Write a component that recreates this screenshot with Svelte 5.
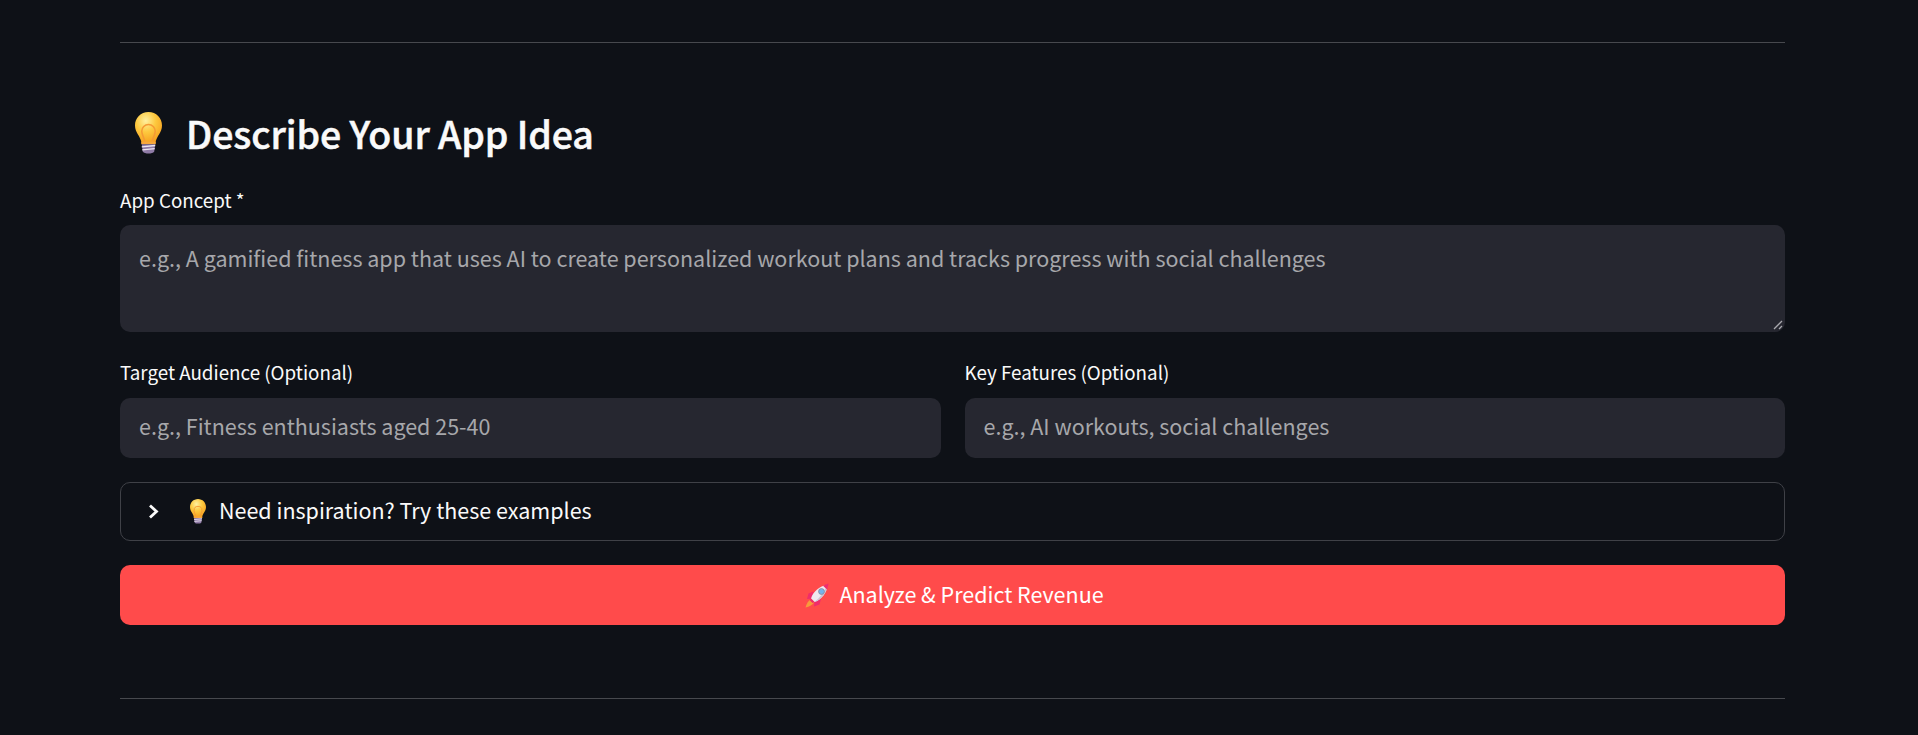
<script>
  const conceptHint = "e.g., A gamified fitness app that uses AI to create personalized workout plans and tracks progress with social challenges";
</script>

{#snippet bulb(width)}
  <svg class="emoji" width={width} height={width * 1.54} viewBox="0 0 26 40" aria-hidden="true">
    <defs>
      <radialGradient id="glass" cx="0.4" cy="0.28" r="0.72">
        <stop offset="0" stop-color="#fff0a0" />
        <stop offset="0.5" stop-color="#fdc93f" />
        <stop offset="1" stop-color="#f6a11f" />
      </radialGradient>
    </defs>
    <path d="M13 0C5.500 0 0 5.800 0 13c0 7 5 9.500 6.500 17h13C21 22.500 26 20 26 13 26 5.800 20.500 0 13 0z" fill="url(#glass)" />
    <path d="M9.500 29c-.4-4-3-7-3-10.500a6.500 6.500 0 0 1 13 0c0 3.500-2.600 6.500-3 10.500" fill="none" stroke="#f59a35" stroke-width="1.500" />
    <path d="M6 28.500h14V31H6z" fill="#f6a83c" />
    <path d="M6.500 31h13l-1 7c-1.500 2.600-9.500 2.600-11 0z" fill="#8f7ba6" />
    <path d="M6.500 33.500l13-1.300M7 36.500l12-1.300" stroke="#ece6f2" stroke-width="1.300" />
  </svg>
{/snippet}

{#snippet rocket()}
  <svg class="emoji" width="24" height="25" viewBox="0 0 24 25" aria-hidden="true">
    <path d="M6 16C3.500 17.500 1.500 20.500 0.500 24.500c4-.8 7-2.500 9-5.500z" fill="#f79a3c" />
    <path d="M8.500 8.500L3.500 10.500 2 16l5.500-.5zM16 16l-1.500 5.500L9 23.500l.5-5z" fill="#f02c6c" />
    <path d="M6 15.500C8 9 14 3.500 22.500 1.500 22 10 16.500 16.500 9.500 19z" fill="#efe9f0" />
    <path d="M9.500 19C15 14.500 19 9 22.500 1.500 22 10 16.500 16.500 9.500 19z" fill="#cdc6d6" />
    <path d="M18 2.800C19.500 2 21.500 1 23.500 0.500 23.300 2.500 22.800 4.800 22 6.500z" fill="#f02c6c" />
    <path d="M6 15.500l3.500 3.500-2 1-3-3z" fill="#f02c6c" />
    <circle cx="16.500" cy="8.500" r="2.900" fill="#74b4ec" stroke="#8d8a9c" stroke-width=".9" />
  </svg>
{/snippet}

<main class="page">
  <hr />

  <h2>{@render bulb(27)}<span>Describe Your App Idea</span></h2>

  <label class="field">
    <span class="label">App Concept *</span>
    <span class="textarea">
      <span class="placeholder">{conceptHint}</span>
      <svg class="grip" width="10" height="10" viewBox="0 0 10 10" aria-hidden="true">
        <path d="M1 9l8-8M6 9l3-3" stroke="#a9a9ae" stroke-width="1.300" />
      </svg>
    </span>
  </label>

  <div class="columns">
    <label class="field">
      <span class="label">Target Audience (Optional)</span>
      <span class="input"><span class="placeholder">e.g., Fitness enthusiasts aged 25-40</span></span>
    </label>
    <label class="field">
      <span class="label">Key Features (Optional)</span>
      <span class="input"><span class="placeholder">e.g., AI workouts, social challenges</span></span>
    </label>
  </div>

  <div class="expander">
    <svg class="chevron" width="11" height="15" viewBox="0 0 11 15" aria-hidden="true">
      <path d="M2 1.500L8.500 7.500 2 13.500" fill="none" stroke="#fafafa" stroke-width="2.800" />
    </svg>
    {@render bulb(16)}
    <span>Need inspiration? Try these examples</span>
  </div>

  <button class="primary">{@render rocket()}<span>Analyze &amp; Predict Revenue</span></button>

  <hr class="last" />
</main>

<style>
  :global(body) {
    background: #0e1117;
  }

  .page {
    box-sizing: border-box;
    width: 1785px;
    height: 735px;
    padding: 42px 0 0 120px;
    overflow: hidden;
    color: #fafafa;
    font-family: "Noto Sans CJK SC", "Noto Sans", sans-serif;
  }

  hr {
    margin: 0;
    border: 0;
    border-top: 1px solid #47494e;
  }

  .last {
    margin-top: 73px;
  }

  h2 {
    display: flex;
    align-items: center;
    gap: 24px;
    margin: 63px 0 0 15px;
    height: 54px;
    font-size: 37.500px;
    font-weight: 500;
    line-height: 54px;
    letter-spacing: -0.08px;
    -webkit-text-stroke: 0.5px #fafafa;
  }

  .emoji {
    flex-shrink: 0;
  }

  .field {
    display: flex;
    flex-direction: column;
    min-width: 0;
  }

  h2 + .field {
    margin-top: 25px;
  }

  .label {
    height: 40px;
    font-size: 18.800px;
    line-height: 30px;
  }

  .textarea,
  .input {
    position: relative;
    display: block;
    box-sizing: border-box;
    background: #262730;
    border-radius: 10px;
    padding: 0 19px;
    font-size: 21.500px;
  }

  .textarea {
    height: 107px;
    padding-top: 17px;
    line-height: 32px;
  }

  .input {
    height: 60px;
    line-height: 56px;
  }

  .placeholder {
    color: #a7a7ab;
    white-space: nowrap;
  }

  .grip {
    position: absolute;
    right: 2px;
    bottom: 2px;
  }

  .columns {
    display: grid;
    grid-template-columns: 1fr 1fr;
    gap: 24px;
    margin-top: 25px;
  }

  .columns .label {
    height: 41px;
  }

  .expander {
    display: flex;
    align-items: center;
    box-sizing: border-box;
    height: 59px;
    margin-top: 24px;
    padding-left: 27px;
    border: 1px solid #3f4147;
    border-radius: 10px;
    font-size: 21.500px;
  }

  .chevron {
    margin-right: 31px;
  }

  .expander span {
    margin-left: 13px;
    padding-bottom: 4px;
  }

  .primary {
    display: flex;
    align-items: center;
    justify-content: center;
    gap: 10px;
    width: 100%;
    height: 60px;
    margin-top: 24px;
    padding: 0 0 0 4px;
    border: 0;
    border-radius: 10px;
    background: #ff4b4b;
    color: #fff;
    font: inherit;
    font-size: 21.500px;
  }

  .primary span {
    padding-bottom: 4px;
  }
</style>
